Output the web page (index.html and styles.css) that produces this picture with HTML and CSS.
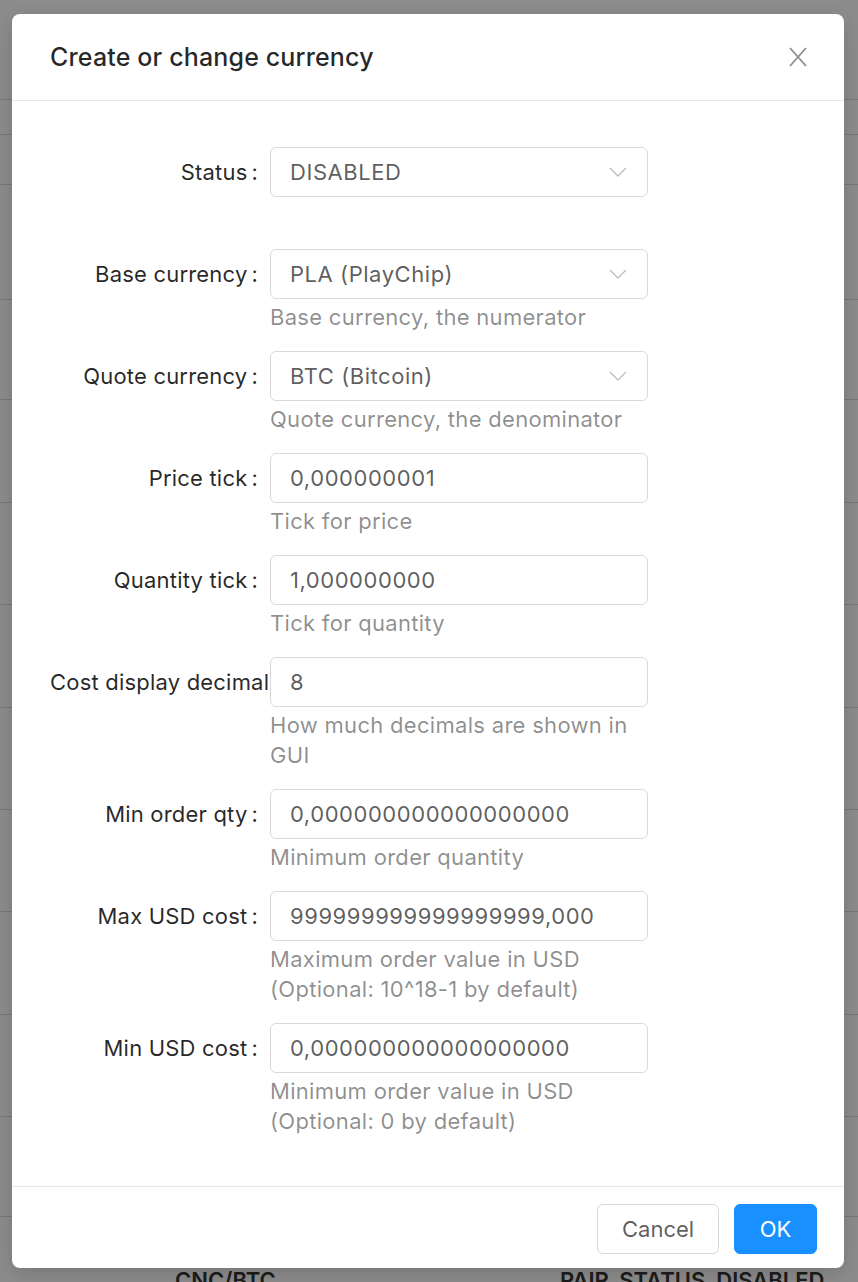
FILE: index.html
```html
<!DOCTYPE html>
<html lang="en">
<head>
<meta charset="utf-8">
<title>Create or change currency</title>
<link rel="stylesheet" href="styles.css">
</head>
<body>
<div class="page">
  <div class="bg-row h100"></div>
  <div class="bg-row h35"></div>
  <div class="bg-row h50"></div>
  <div class="bg-row h115"></div>
  <div class="bg-row h100"></div>
  <div class="bg-row h103"></div>
  <div class="bg-row h102"></div>
  <div class="bg-row h103"></div>
  <div class="bg-row h102"></div>
  <div class="bg-row h102"></div>
  <div class="bg-row h103"></div>
  <div class="bg-row h102"></div>
  <div class="bg-row h100"></div>
  <div class="bg-row bg-last"><span class="bg-pair">CNC/BTC</span><span class="bg-status">PAIR_STATUS_DISABLED</span></div>
</div>
<div class="mask"></div>
<div class="modal">
  <div class="modal-header">
    <div class="modal-title">Create or change currency</div>
    <span class="modal-close" aria-label="Close">
      <svg width="20" height="20" viewBox="0 0 20 20"><path d="M2 1 L18 19 M18 1 L2 19" stroke="#8c8c8c" stroke-width="1.8" fill="none"/></svg>
    </span>
  </div>
  <div class="modal-body">
    <div class="form-item no-help">
      <label class="form-label">Status</label>
      <div class="form-control">
        <div class="select"><span class="select-value">DISABLED</span><svg class="chev" width="18" height="10" viewBox="0 0 18 10"><path d="M1 1 L9 9 L17 1" stroke="#bfbfbf" stroke-width="1.4" fill="none"/></svg></div>
      </div>
    </div>
    <div class="form-item">
      <label class="form-label">Base currency</label>
      <div class="form-control">
        <div class="select"><span class="select-value">PLA (PlayChip)</span><svg class="chev" width="18" height="10" viewBox="0 0 18 10"><path d="M1 1 L9 9 L17 1" stroke="#bfbfbf" stroke-width="1.4" fill="none"/></svg></div>
        <div class="help">Base currency, the numerator</div>
      </div>
    </div>
    <div class="form-item">
      <label class="form-label">Quote currency</label>
      <div class="form-control">
        <div class="select"><span class="select-value">BTC (Bitcoin)</span><svg class="chev" width="18" height="10" viewBox="0 0 18 10"><path d="M1 1 L9 9 L17 1" stroke="#bfbfbf" stroke-width="1.4" fill="none"/></svg></div>
        <div class="help">Quote currency, the denominator</div>
      </div>
    </div>
    <div class="form-item">
      <label class="form-label">Price tick</label>
      <div class="form-control">
        <div class="input">0,000000001</div>
        <div class="help">Tick for price</div>
      </div>
    </div>
    <div class="form-item">
      <label class="form-label">Quantity tick</label>
      <div class="form-control">
        <div class="input">1,000000000</div>
        <div class="help">Tick for quantity</div>
      </div>
    </div>
    <div class="form-item">
      <label class="form-label">Cost display decimal</label>
      <div class="form-control">
        <div class="input">8</div>
        <div class="help">How much decimals are shown in GUI</div>
      </div>
    </div>
    <div class="form-item">
      <label class="form-label">Min order qty</label>
      <div class="form-control">
        <div class="input">0,000000000000000000</div>
        <div class="help">Minimum order quantity</div>
      </div>
    </div>
    <div class="form-item">
      <label class="form-label">Max USD cost</label>
      <div class="form-control">
        <div class="input">999999999999999999,000</div>
        <div class="help">Maximum order value in USD (Optional: 10^18-1 by default)</div>
      </div>
    </div>
    <div class="form-item">
      <label class="form-label">Min USD cost</label>
      <div class="form-control">
        <div class="input">0,000000000000000000</div>
        <div class="help">Minimum order value in USD (Optional: 0 by default)</div>
      </div>
    </div>
  </div>
  <div class="modal-footer">
    <button class="btn">Cancel</button>
    <button class="btn btn-primary">OK</button>
  </div>
</div>
</body>
</html>
```

FILE: styles.css
```css
* { box-sizing: border-box; }
html, body { margin: 0; padding: 0; }
body {
  width: 858px;
  height: 1282px;
  overflow: hidden;
  position: relative;
  background: #ffffff;
  font-family: Inter, "Liberation Sans", Arial, sans-serif;
  font-size: 22px;
  color: rgba(0,0,0,0.65);
}

/* background table */
.page { display: flex; flex-direction: column; }
.bg-row { border-bottom: 1px solid #d8d8d8; flex: none; }
.h100 { height: 100px; }
.h35 { height: 35px; }
.h50 { height: 50px; }
.h115 { height: 115px; }
.h103 { height: 103px; }
.h102 { height: 102px; }
.bg-last { height: 100px; border-bottom: none; position: relative; font-weight: 600; color: #333; }
.bg-pair { position: absolute; left: 175px; top: 50px; }
.bg-status { position: absolute; left: 560px; top: 50px; }

.mask {
  position: absolute;
  inset: 0;
  background: rgba(0,0,0,0.45);
}

/* modal */
.modal {
  position: absolute;
  left: 12px;
  top: 14px;
  width: 832px;
  background: #fff;
  border-radius: 8px;
  box-shadow: 0 6px 20px rgba(0,0,0,0.15);
}
.modal-header {
  height: 87px;
  border-bottom: 1px solid #e8e8e8;
  padding: 0 36px 0 38px;
  display: flex;
  align-items: center;
}
.modal-title {
  flex: 1;
  font-size: 25px;
  font-weight: 500;
  color: rgba(0,0,0,0.85);
  letter-spacing: 0.15px;
}
.modal-close { display: flex; }

.modal-body {
  padding: 46px 38px 31px 38px;
}
.form-item {
  display: grid;
  grid-template-columns: 220px 378px;
  margin-bottom: 19px;
}
.form-item.no-help { margin-bottom: 52px; }
.form-label {
  text-align: right;
  white-space: nowrap;
  overflow: hidden;
  line-height: 50px;
  color: rgba(0,0,0,0.85);
  letter-spacing: 0.2px;
}
.form-label::after {
  content: ":";
  margin: 0 12px 0 4px;
}
.input, .select {
  height: 50px;
  border: 1px solid #d9d9d9;
  border-radius: 6px;
  padding: 0 20px 0 19px;
  display: flex;
  align-items: center;
  color: rgba(0,0,0,0.65);
  letter-spacing: 0.55px;
}
.select-value { flex: 1; }
.chev { flex: none; }
.help {
  margin-top: 3px;
  line-height: 30px;
  color: rgba(0,0,0,0.45);
  letter-spacing: 0.3px;
}

.modal-footer {
  border-top: 1px solid #e8e8e8;
  padding: 17px 27px 14px;
  display: flex;
  justify-content: flex-end;
  gap: 15px;
}
.btn {
  height: 50px;
  border: 1px solid #d9d9d9;
  border-radius: 6px;
  background: #fff;
  font-family: inherit;
  font-size: 22px;
  color: rgba(0,0,0,0.65);
  padding: 0 24px;
  min-width: 83px;
}
.btn:first-child { width: 122px; }
.btn-primary {
  background: #1890ff;
  border-color: #1890ff;
  color: #fff;
}
```
